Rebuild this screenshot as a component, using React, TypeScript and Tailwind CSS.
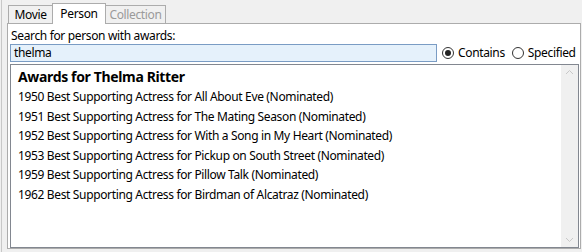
import React from "react";

const awards = [
  "1950 Best Supporting Actress for All About Eve (Nominated)",
  "1951 Best Supporting Actress for The Mating Season (Nominated)",
  "1952 Best Supporting Actress for With a Song in My Heart (Nominated)",
  "1953 Best Supporting Actress for Pickup on South Street (Nominated)",
  "1959 Best Supporting Actress for Pillow Talk (Nominated)",
  "1962 Best Supporting Actress for Birdman of Alcatraz (Nominated)",
];

const Radio: React.FC<{ checked?: boolean; label: string }> = ({ checked, label }) => (
  <div className="flex items-center gap-[4px]">
    <div className="w-[12px] h-[12px] rounded-full border border-[#333] bg-white flex items-center justify-center">
      {checked && <div className="w-[6px] h-[6px] rounded-full bg-[#222]" />}
    </div>
    <span>{label}</span>
  </div>
);

const App: React.FC = () => {
  return (
    <div
      className="w-[582px] h-[252px] bg-[#f0f0f0] overflow-hidden text-[12px] tracking-[-0.35px] text-black"
      style={{ fontFamily: '"Noto Sans", "Open Sans", sans-serif' }}
    >
      <div className="h-full border-l border-[#c8c8c8] ml-[1px] pl-[5px] pt-[2px] flex flex-col">
        {/* TABS */}
        <div className="flex items-end h-[21px] pl-[1px] relative z-10">
          <div className="h-[18px] w-[45px] flex items-center justify-center border border-[#acacac] border-b-0 bg-[#f0f0f0]">
            Movie
          </div>
          <div className="h-[21px] w-[54px] flex items-center justify-center border border-[#acacac] border-b-0 bg-white -mb-[1px] -ml-[1px]">
            Person
          </div>
          <div className="h-[18px] w-[60px] flex items-center justify-center border border-[#acacac] border-b-0 border-l-0 bg-[#f0f0f0] text-[#9a9a9a]">
            Collection
          </div>
        </div>

        {/* PANEL */}
        <div className="w-[574px] h-[226px] border border-[#acacac] bg-white px-[2px] pt-[5px] flex flex-col">
          <div className="leading-[14px] pl-[1px]">Search for person with awards:</div>
          <div className="flex items-center mt-[1px]">
            <div className="w-[427px] h-[18px] border border-[#7a9cc4] bg-[#e5f1fb] px-[3px] leading-[16px]">
              thelma
            </div>
            <div className="flex items-center gap-[7px] ml-[5px]">
              <Radio checked label="Contains" />
              <Radio label="Specified" />
            </div>
          </div>

          {/* LIST */}
          <div className="mt-[2px] w-[569px] h-[184px] border border-[#828790] flex">
            <div className="flex-1 pl-[7px] pt-[2px]">
              <div className="text-[14px] font-bold leading-[19px] mb-[1px]">Awards for Thelma Ritter</div>
              {awards.map((a) => (
                <div key={a} className="leading-[19.6px]">
                  {a}
                </div>
              ))}
            </div>
            <div className="w-[17px] bg-[#f0f0f0] flex flex-col justify-between items-center py-[4px]">
              <svg width="9" height="6" viewBox="0 0 9 6">
                <path d="M1 5 L4.5 1.5 L8 5" fill="none" stroke="#c8c8c8" strokeWidth="1" />
              </svg>
              <svg width="9" height="6" viewBox="0 0 9 6">
                <path d="M1 1 L4.5 4.5 L8 1" fill="none" stroke="#c8c8c8" strokeWidth="1" />
              </svg>
            </div>
          </div>
        </div>
      </div>
    </div>
  );
};

export default App;
